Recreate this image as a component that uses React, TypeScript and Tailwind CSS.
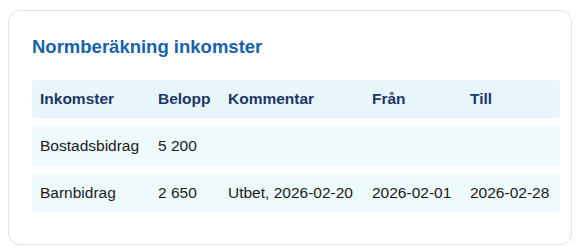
import React from 'react';

type Rad = {
  inkomst: string;
  belopp: string;
  kommentar: string;
  fran: string;
  till: string;
};

const rader: Rad[] = [
  { inkomst: 'Bostadsbidrag', belopp: '5 200', kommentar: '', fran: '', till: '' },
  { inkomst: 'Barnbidrag', belopp: '2 650', kommentar: 'Utbet, 2026-02-20', fran: '2026-02-01', till: '2026-02-28' },
];

const kolumner = 'grid grid-cols-[118px_70px_144px_98px_98px] items-center rounded-[4px]';

export default function App() {
  return (
    <div className="min-h-[252px] bg-white pl-2 pt-[10px] font-['Liberation_Sans',Arial,sans-serif]">
      <div className="w-[564px] rounded-[12px] border border-[#e2e2e2] bg-white pl-[23px] pt-[25px] pb-[32px]">
        <h2 className="text-[18.5px] leading-[22px] font-bold text-[#1562ac]">Normberäkning inkomster</h2>

        <div className="mt-[22px] flex w-[528px] flex-col gap-2 text-[15.5px]">
          {/* Rubrikrad */}
          <div className={`${kolumner} h-[38px] bg-[#e7f6fb] font-bold text-[#1d3766]`}>
            <div className="pl-2">Inkomster</div>
            <div className="pl-2">Belopp</div>
            <div className="pl-2">Kommentar</div>
            <div className="pl-2">Från</div>
            <div className="pl-2">Till</div>
          </div>

          {rader.map((r, i) => (
            <div
              key={r.inkomst}
              className={`${kolumner} ${i === 0 ? 'h-[40px]' : 'h-[38px]'} bg-[#effafd] text-[#1a1a1a]`}
            >
              <div className="pl-2">{r.inkomst}</div>
              <div className="pl-2">{r.belopp}</div>
              <div className="pl-2">{r.kommentar}</div>
              <div className="pl-2">{r.fran}</div>
              <div className="pl-2">{r.till}</div>
            </div>
          ))}
        </div>
      </div>
    </div>
  );
}
